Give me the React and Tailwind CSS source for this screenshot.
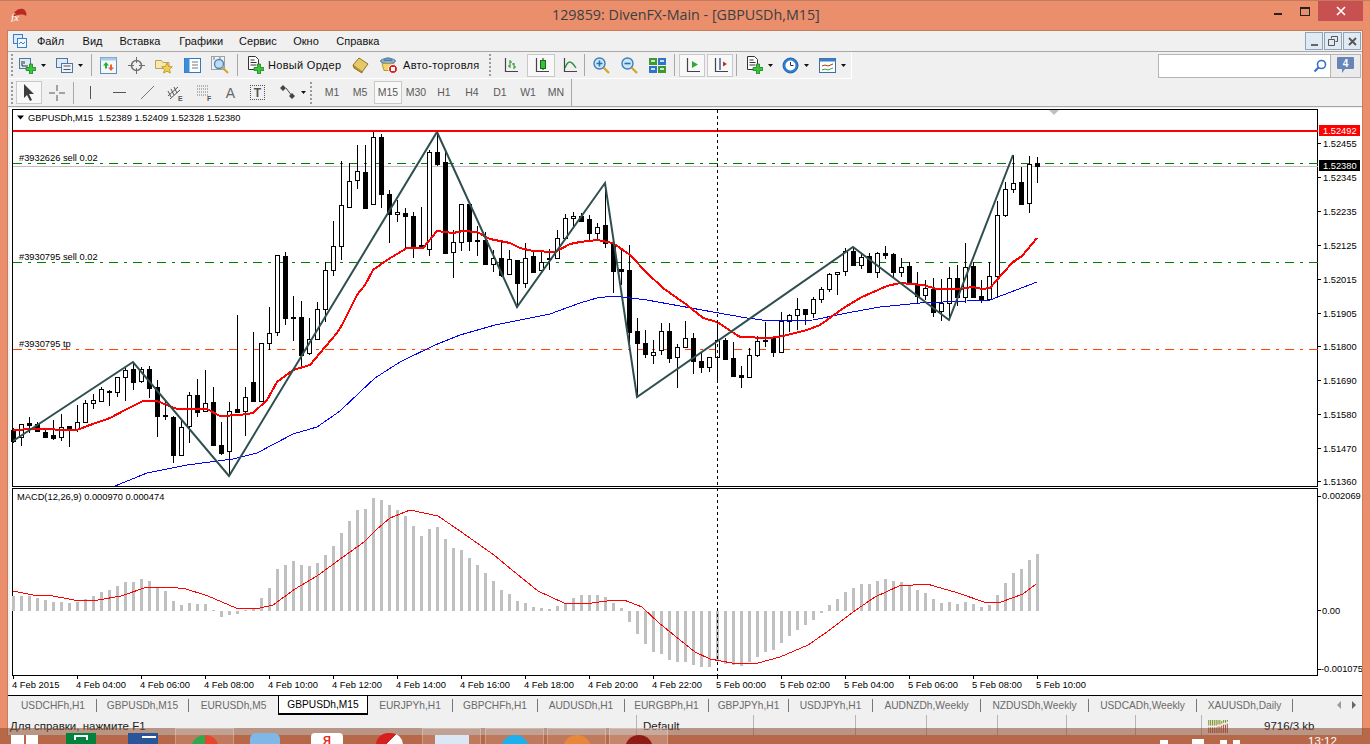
import React from "react";

// hi, body top, body bottom, lo, filled — pixel rows, one candle every 8px from x=13
const CANDLES = [
  [428,430,441,443,1],[424,424,437,446,0],[417,423,425,433,1],[422,424,431,432,1],[428,432,437,437,1],[420,435,438,440,1],
  [414,427,437,441,0],[426,426,429,447,1],[405,422,429,432,0],[400,403,422,422,0],[394,400,403,409,0],[387,389,401,401,0],
  [390,391,392,406,1],[377,377,392,397,0],[368,370,377,401,0],[362,369,382,390,1],[367,369,381,383,0],[366,369,388,398,1],
  [380,387,416,437,1],[401,415,416,420,1],[416,417,455,463,1],[421,427,455,455,0],[392,395,426,443,0],[379,395,412,417,1],
  [370,403,411,412,0],[387,402,445,445,1],[422,445,453,455,1],[402,411,451,476,0],[315,409,412,412,1],[387,397,411,436,0],
  [332,382,401,401,1],[343,343,401,401,0],[307,333,343,350,0],[255,255,332,336,0],[252,256,318,325,1],[296,317,318,341,1],
  [301,317,355,367,1],[318,339,353,355,0],[302,309,339,340,0],[262,270,309,322,0],[221,246,270,276,0],[161,205,246,260,0],
  [163,181,207,207,0],[145,171,180,189,0],[145,172,208,208,1],[132,137,204,204,0],[134,137,194,208,1],[190,194,214,243,1],
  [200,212,214,222,0],[208,213,216,248,1],[212,216,247,258,1],[207,245,248,248,1],[150,152,249,256,0],[132,152,164,166,1],
  [152,162,253,254,1],[230,242,252,278,0],[204,204,242,251,0],[202,204,241,251,1],[226,240,241,256,1],[232,240,264,265,1],
  [250,258,264,272,0],[242,258,275,277,1],[250,259,274,275,0],[260,260,283,308,1],[243,258,283,288,0],[250,256,272,272,1],
  [250,262,270,270,0],[249,258,259,270,0],[230,238,258,259,0],[214,218,238,240,0],[212,216,218,227,0],[213,216,221,222,1],
  [215,219,233,240,1],[223,227,233,240,0],[183,225,243,248,1],[242,244,271,293,1],[248,269,271,285,1],[245,270,332,343,1],
  [318,331,343,397,1],[330,343,354,358,1],[340,352,355,364,0],[323,331,350,355,0],[323,331,358,363,1],[344,347,357,388,0],
  [321,338,347,347,0],[333,338,361,374,1],[352,361,367,373,1],[357,357,367,372,0],[324,340,357,381,0],[338,340,359,359,1],
  [342,358,376,376,1],[366,375,377,388,1],[348,355,377,378,0],[336,341,355,357,0],[322,340,341,347,0],[337,337,352,357,1],
  [312,321,352,353,0],[314,315,321,332,0],[298,309,315,330,0],[309,309,314,325,1],[297,299,313,318,0],[287,289,299,303,0],
  [273,274,289,292,0],[272,272,274,295,0],[248,251,271,276,0],[247,251,265,266,1],[253,257,265,269,0],[253,256,272,273,1],
  [252,253,272,278,0],[246,253,255,259,1],[253,254,272,277,1],[258,267,272,277,0],[262,266,283,285,1],[272,285,296,303,1],
  [280,288,295,300,0],[278,289,312,317,1],[279,303,311,321,0],[267,278,303,320,0],[265,278,297,306,1],[243,267,297,303,0],
  [262,266,297,297,1],[280,296,299,303,1],[262,276,299,300,0],[201,215,276,297,0],[182,189,215,217,0],[155,183,189,193,0],
  [167,182,204,205,1],[156,164,203,213,0],[157,163,166,183,1],
];

const RED_MA = "13,430 33,429 77,430 90,425 110,418 127,409 143,401 157,401 177,409 190,409 207,409 220,416 240,415 253,413 267,400 277,382 293,370 310,365 320,353 337,333 342,325 357,295 365,285 373,270 387,260 407,248 423,248 437,231 453,233 463,231 477,232 490,239 510,243 520,248 533,251 555,252 570,244 580,242 597,240 613,243 630,255 647,273 663,288 677,298 687,305 703,318 717,322 740,337 770,338 783,336 807,330 820,325 845,307 862,297 887,286 900,283 923,285 937,289 960,289 972,287 983,289 990,288 1003,273 1013,262 1022,256 1037,238";
const BLUE_MA = "115,486 147,473 187,465 233,459 257,453 293,434 317,427 340,411 360,392 375,378 400,362 435,345 460,335 495,325 550,314 580,303 597,298 613,296 647,300 680,306 713,312 747,318 770,321 813,320 847,313 880,307 920,303 990,300 1037,282";
const ZIGZAG = "13,441 133,362 229,476 437,132 517,307 605,183 637,397 853,247 949,320 1013,155";
const SIGNAL = "13,591 33,595 48,595 74,600 98,600 121,596 147,587 169,587 186,589 208,596 236,608 260,608 273,605 295,589 317,576 343,557 364,542 377,529 390,518 410,510 438,516 460,531 494,555 512,570 538,591 564,603 592,603 607,601 624,600 642,607 659,623 680,640 695,652 710,659 732,663 758,663 780,657 808,645 827,632 853,612 875,597 899,586 927,584 958,593 984,602 1001,602 1023,594 1036,584";

// MACD histogram, height of each bar above (or below when negative) the zero line at y=611
const MACD = [
  15,15,15,13,11,9,9,8,9,12,15,19,21,25,29,29,32,30,24,20,10,6,8,7,7,1,-6,-4,-3,1,3,13,23,42,46,50,46,45,48,56,65,78,90,101,102,113,111,106,101,95,85,75,82,84,72,63,61,53,46,38,30,21,17,10,8,4,3,2,5,8,13,16,16,16,14,8,3,
  -11,-23,-33,-41,-43,-49,-51,-51,-54,-56,-56,-50,-53,-54,-55,-51,-46,-41,-39,-32,-25,-19,-14,-9,-2,6,12,19,23,27,27,30,32,30,29,26,21,18,12,8,9,7,9,7,4,6,16,28,38,42,51,57,
];

const PRICE_LABELS = [
  ["1.52455", 143], ["1.52345", 177], ["1.52235", 211], ["1.52125", 245], ["1.52015", 279], ["1.51905", 313],
  ["1.51800", 346], ["1.51690", 380], ["1.51580", 414], ["1.51470", 448], ["1.51360", 481],
];

const TIME_LABELS = [
  "4 Feb 2015", "4 Feb 04:00", "4 Feb 06:00", "4 Feb 08:00", "4 Feb 10:00", "4 Feb 12:00", "4 Feb 14:00", "4 Feb 16:00", "4 Feb 18:00",
  "4 Feb 20:00", "4 Feb 22:00", "5 Feb 00:00", "5 Feb 02:00", "5 Feb 04:00", "5 Feb 06:00", "5 Feb 08:00", "5 Feb 10:00",
];

const TABS = [
  ["USDCHFh,H1", "w-[87px]"], ["GBPUSDh,M15", "w-[92px]"], ["EURUSDh,M5", "w-[89px]"], ["GBPUSDh,M15", "w-[90px]"],
  ["EURJPYh,H1", "w-[85px]"], ["GBPCHFh,H1", "w-[85px]"], ["AUDUSDh,H1", "w-[87px]"], ["EURGBPh,H1", "w-[84px]"],
  ["GBPJPYh,H1", "w-[80px]"], ["USDJPYh,H1", "w-[84px]"], ["AUDNZDh,Weekly", "w-[108px]"], ["NZDUSDh,Weekly", "w-[108px]"],
  ["USDCADh,Weekly", "w-[108px]"], ["XAUUSDh,Daily", "w-[96px]"],
];

const MENU = [
  ["Файл", "ml-[10px]"], ["Вид", "ml-[18.5px]"], ["Вставка", "ml-[17px]"], ["Графики", "ml-[19px]"],
  ["Сервис", "ml-[16px]"], ["Окно", "ml-[16.5px]"], ["Справка", "ml-[17.5px]"],
];

const PERIODS = ["M1", "M5", "M15", "M30", "H1", "H4", "D1", "W1", "MN"];

const Chart = () => (
  <svg viewBox="8 107 1354 588" className="block h-[588px] w-[1354px]">
    <rect x="8" y="107" width="1354" height="588" fill="#ffffff" />
    <rect x="8" y="107" width="2" height="588" fill="#f0f0f0" />
    <rect x="8" y="107" width="1354" height="1" fill="#f0f0f0" />

    {/* panes */}
    <g shapeRendering="crispEdges" fill="none" stroke="#000000">
      <rect x="12.5" y="109.5" width="1305" height="377" />
      <rect x="12.5" y="488.5" width="1305" height="187" />
    </g>

    {/* order lines */}
    <g shapeRendering="crispEdges">
      <line x1="13" x2="1318" y1="166" y2="166" stroke="#c0c0c0" />
      <line x1="13" x2="1318" y1="163.5" y2="163.5" stroke="#008000" strokeDasharray="9 6 3 6" />
      <line x1="13" x2="1318" y1="262.5" y2="262.5" stroke="#008000" strokeDasharray="9 6 3 6" />
      <line x1="13" x2="1318" y1="349.5" y2="349.5" stroke="#ff4500" strokeDasharray="9 6 3 6" />
    </g>

    {/* candles */}
    <g shapeRendering="crispEdges">
      {CANDLES.map(([hi, top, bot, lo, filled], i) => {
        const x = 13 + 8 * i;
        return (
          <g key={i}>
            <line x1={x + 0.5} x2={x + 0.5} y1={hi} y2={lo} stroke="#000000" />
            <rect x={x - 1.5} y={top + 0.5} width="4" height={Math.max(bot - top, 1)} fill={filled ? "#000000" : "#ffffff"} stroke="#000000" />
          </g>
        );
      })}
    </g>

    <polyline points={BLUE_MA} fill="none" stroke="#0000ff" strokeWidth="1" shapeRendering="crispEdges" />
    <polyline points={RED_MA} fill="none" stroke="#ff0000" strokeWidth="2" shapeRendering="crispEdges" />
    <polyline points={ZIGZAG} fill="none" stroke="#2f4f4f" strokeWidth="2" />
    <rect x="13" y="130" width="1305" height="2" fill="#ff0000" />
    <path d="M1049 110h10l-5 5z" fill="#c0c0c0" />

    {/* MACD */}
    <g shapeRendering="crispEdges" fill="#c0c0c0">
      {MACD.map((v, i) => (
        <rect key={i} x={12 + 8 * i} y={v > 0 ? 611 - v : 611} width="3" height={Math.abs(v)} />
      ))}
    </g>
    <polyline points={SIGNAL} fill="none" stroke="#ff0000" strokeWidth="1" shapeRendering="crispEdges" />

    <line x1="717.5" x2="717.5" y1="110" y2="676" stroke="#000000" strokeDasharray="3 3" shapeRendering="crispEdges" />

    {/* labels inside the panes */}
    <g className="fill-black text-[9.3px]">
      <path d="M17 115.5h7l-3.5 4z" fill="#000000" />
      <text x="28" y="121">GBPUSDh,M15&#160;&#160;1.52389 1.52409 1.52328 1.52380</text>
      <text x="19" y="161">#3932626 sell 0.02</text>
      <text x="19" y="260">#3930795 sell 0.02</text>
      <text x="19" y="347">#3930795 tp</text>
      <text x="17" y="500">MACD(12,26,9) 0.000970 0.000474</text>
    </g>

    {/* price scale */}
    <g className="fill-black text-[9.3px]">
      {PRICE_LABELS.map(([label, y]) => (
        <g key={label}>
          <rect x="1318" y={y} width="3" height="1" fill="#000000" />
          <text x="1323" y={y + 3.5}>{label}</text>
        </g>
      ))}
      <rect x="1318" y="496" width="3" height="1" fill="#000000" />
      <rect x="1318" y="610" width="3" height="1" fill="#000000" />
      <rect x="1318" y="669" width="3" height="1" fill="#000000" />
      <text x="1322" y="499">0.002069</text>
      <text x="1322" y="614">0.00</text>
      <text x="1321" y="672">-0.001075</text>
    </g>
    <rect x="1319" y="125" width="41" height="11" fill="#ff0000" />
    <text x="1323" y="134" className="fill-white text-[9.3px]">1.52492</text>
    <rect x="1319" y="160" width="41" height="11" fill="#000000" />
    <text x="1323" y="169" className="fill-white text-[9.3px]">1.52380</text>

    {/* time scale */}
    <g className="fill-black text-[9.4px]">
      {TIME_LABELS.map((label, i) => (
        <g key={i}>
          <rect x={13 + 64 * i} y="676" width="1" height="3" fill="#000000" />
          <text x={12 + 64 * i} y="688">{label}</text>
        </g>
      ))}
    </g>
  </svg>
);

/* ---------- toolbar bits ---------- */

const Grip = ({ className = "" }) => <div className={`h-[22px] w-[3px] shrink-0 border-l-2 border-dotted border-[#9a9a9a] ${className}`} />;
const Sep = ({ className = "" }) => <div className={`h-[22px] w-px shrink-0 bg-[#a8a8a8] ${className}`} />;
const Caret = () => <svg width="5" height="3" viewBox="0 0 5 3" className="shrink-0"><path d="M0 0h5L2.5 3z" fill="#111111" /></svg>;

const Ico = ({ children, w = 17, h = 17, vb }) => (
  <svg width={w} height={h} viewBox={vb || `0 0 ${w} ${h}`} className="block shrink-0">{children}</svg>
);

const GreenPlus = ({ x = 7, y = 7 }) => (
  <path transform={`translate(${x} ${y})`} d="M3.5 0h3v3.5H10v3H6.5V10h-3V6.5H0v-3h3.5z" fill="#3cc43c" stroke="#17801f" strokeWidth="0.8" />
);

const DocWin = () => (
  <>
    <rect x="0.5" y="1.5" width="11" height="10" fill="#dfeaf6" stroke="#4f76a3" />
    <path d="M3 4v5h6M5 4v3" stroke="#333333" fill="none" />
  </>
);

const NewChartIcon = () => <Ico><DocWin /><GreenPlus /></Ico>;
const ProfileIcon = () => (
  <Ico>
    <rect x="0.5" y="1.5" width="11" height="9" fill="#dfeaf6" stroke="#4f76a3" />
    <rect x="5.5" y="6.5" width="11" height="9" fill="#edf3fa" stroke="#4f76a3" />
    <path d="M7.5 9h7M7.5 12.5h7" stroke="#555555" />
  </Ico>
);
const MarketIcon = () => (
  <Ico>
    <rect x="0.5" y="0.5" width="16" height="16" fill="#f4f8fc" stroke="#5c8fb8" />
    <rect x="0.5" y="0.5" width="16" height="3" fill="#a9cbe6" />
    <path d="M6 5l3 3.5H7v3H5v-3H3z" fill="#2bab3a" />
    <path d="M11 14l-3-3.5h2v-3h2v3h2z" fill="#e2632f" />
  </Ico>
);
const CrossIcon = () => (
  <Ico>
    <circle cx="8.5" cy="8.5" r="5" fill="none" stroke="#6e6e6e" strokeWidth="1.5" />
    <path d="M8.5 0v6M8.5 11v6M0 8.5h6M11 8.5h6" stroke="#6e6e6e" />
  </Ico>
);
const FolderStarIcon = () => (
  <Ico w={18} h={17}>
    <path d="M0.5 3.5h6l1.5 2h6v6h-13.5z" fill="#f6e9ae" stroke="#b9a35e" />
    <path d="M12 6l1.6 3.4 3.7.4-2.7 2.5.7 3.7-3.3-1.8-3.3 1.8.7-3.7-2.7-2.5 3.7-.4z" fill="#f3cf4d" stroke="#b58e1f" strokeWidth="0.8" />
  </Ico>
);
const NavigatorIcon = () => (
  <Ico>
    <rect x="0.5" y="1.5" width="16" height="14" fill="#ffffff" stroke="#2f78c4" />
    <rect x="0.5" y="1.5" width="5" height="14" fill="#3d8ed8" />
    <path d="M8 5h6M8 8h6M8 11h6" stroke="#777777" />
  </Ico>
);
const LensChartIcon = () => (
  <Ico w={18} h={18}>
    <rect x="0.5" y="0.5" width="13" height="13" fill="#eef1f5" stroke="#9aa3ad" />
    <path d="M3 1v3M9 1v3" stroke="#777777" />
    <circle cx="8" cy="8" r="4.5" fill="#bcdcf3" stroke="#5785ad" strokeWidth="1.4" />
    <path d="M11.5 11.5L17 17" stroke="#d3a32a" strokeWidth="2" />
  </Ico>
);
const NewOrderIcon = () => (
  <Ico w={17} h={18}>
    <path d="M1.5 0.5h7l3 3v10h-10z" fill="#ffffff" stroke="#333333" />
    <path d="M3.5 4h4M3.5 6.5h6M3.5 9h6" stroke="#333333" />
    <GreenPlus x={7} y={8} />
  </Ico>
);
const BookIcon = () => (
  <Ico>
    <path d="M1 8L7 1l9 6-6 8z" fill="#e7c866" stroke="#8f7423" />
    <path d="M1 8l1 3 8 5 0-2" fill="#b8933a" stroke="#8f7423" />
  </Ico>
);
const AutoTradeIcon = () => (
  <Ico w={18} h={18}>
    <ellipse cx="8" cy="5" rx="7.5" ry="2.5" fill="#8ab4d8" stroke="#4a7aa6" />
    <path d="M4 4.5C4 1 12 1 12 4.5z" fill="#6f9dc6" stroke="#4a7aa6" />
    <path d="M2 7.5h12l-1 7H4z" fill="#f2d568" stroke="#b89a35" />
    <circle cx="13" cy="13" r="4.5" fill="#d42020" stroke="#ffffff" />
    <rect x="11" y="11" width="4" height="4" fill="#ffffff" />
  </Ico>
);
const Axis = () => <path d="M3.5 1v13.5H16" fill="none" stroke="#444444" strokeWidth="1.2" />;
const BarsIcon = () => (
  <Ico>
    <Axis />
    <path d="M8 3v8M6 9h2M8 5h2M12 6v6M10 7h2M12 10h2" stroke="#1d8a1d" fill="none" />
  </Ico>
);
const CandleIcon = () => (
  <Ico>
    <Axis />
    <path d="M10 1v12" stroke="#222222" />
    <rect x="7.5" y="3.5" width="5" height="8" fill="#38c038" stroke="#176b17" />
  </Ico>
);
const LineIcon = () => (
  <Ico>
    <Axis />
    <path d="M4 11C7 3 10 3 15 11" fill="none" stroke="#2e8b3e" strokeWidth="1.3" />
  </Ico>
);
const Lens = ({ plus }) => (
  <Ico>
    <circle cx="6.5" cy="6.5" r="5.5" fill="#c9e6fa" stroke="#3f7fb8" strokeWidth="1.4" />
    <path d={plus ? "M3.5 6.5h6M6.5 3.5v6" : "M3.5 6.5h6"} stroke="#2f6fa8" strokeWidth="1.6" />
    <path d="M10.5 10.5L16 16" stroke="#d3a32a" strokeWidth="2.2" />
  </Ico>
);
const TileIcon = () => (
  <Ico>
    <rect x="0" y="1" width="8" height="7" fill="#3d9a2c" />
    <rect x="9" y="1" width="8" height="7" fill="#2f74c8" />
    <rect x="0" y="9" width="8" height="7" fill="#2f74c8" />
    <rect x="9" y="9" width="8" height="7" fill="#3d9a2c" />
    <path d="M2 4h4M11 4h4M2 12h4M11 12h4" stroke="#ffffff" strokeWidth="1.5" />
  </Ico>
);
const AutoScrollIcon = () => (
  <Ico>
    <Axis />
    <path d="M8 4v7l6-3.5z" fill="#2faa3a" />
  </Ico>
);
const ShiftIcon = () => (
  <Ico>
    <Axis />
    <path d="M8 1v12" stroke="#3a5a90" strokeWidth="1.4" />
    <path d="M15 7l-4-2.5v5z" fill="#b5341a" />
  </Ico>
);
const ClockIcon = () => (
  <Ico>
    <circle cx="8.5" cy="8.5" r="7.5" fill="#2f7fd0" stroke="#1d5fa8" />
    <circle cx="8.5" cy="8.5" r="5" fill="#ffffff" />
    <path d="M8.5 5v3.5h3" stroke="#333333" fill="none" />
  </Ico>
);
const TemplateIcon = () => (
  <Ico>
    <rect x="0.5" y="1.5" width="16" height="14" fill="#ffffff" stroke="#3d6ea5" />
    <rect x="0.5" y="1.5" width="16" height="3" fill="#3d7fc4" />
    <path d="M3 9l3-1 3 1 5-2" stroke="#b5341a" fill="none" />
    <path d="M3 13l3-1 3 1 5-2" stroke="#2faa3a" fill="none" />
  </Ico>
);

const Btn = ({ children, className = "", active = false }) => (
  <div className={`flex h-[23px] shrink-0 items-center justify-center ${active ? "border border-[#c9c9c9] bg-[#f8f8f8]" : ""} ${className.includes("w-[") ? "" : "w-[28px]"} ${className}`}>
    {children}
  </div>
);

const Drop = ({ children, className = "" }) => (
  <div className={`flex shrink-0 items-center gap-[5px] ${className}`}>
    {children}
    <Caret />
  </div>
);

const MdiBtn = ({ children }) => (
  <div className="flex h-[18px] w-[18px] items-center justify-center border border-[#8fa3b5] bg-[#dfeaf5]">{children}</div>
);

const TaskFrame = ({ children, className = "" }) => (
  <div className={`flex h-[16px] w-[59px] shrink-0 justify-center overflow-hidden border border-b-0 border-[#ffffff40] bg-[#ffffff1f] pt-[6px] ${className}`}>
    {children}
  </div>
);

const Round = ({ className }) => <div className={`h-[28px] w-[28px] shrink-0 rounded-full ${className}`} />;

export default function App() {
  return (
    <div className="relative flex h-[744px] w-[1370px] flex-col overflow-hidden bg-[#eb8e6b] font-['Liberation_Sans',sans-serif]">
      {/* title bar */}
      <div className="flex h-[30px] shrink-0 items-start border-t border-[#c67a5c]">
        <div className="ml-[10px] mt-[7px] w-[17px]">
          <svg width="17" height="14" viewBox="0 0 17 14">
            <path d="M3 9C3 3 9 0 13 1c3 1 4 5 3 7-3-2-8-2-13 1z" fill="#b82a22" />
            <text x="1" y="13" fill="#ffffff" className="font-['Liberation_Serif',serif] text-[11px] italic">fx</text>
          </svg>
        </div>
        <div className="ml-[525px] mt-[4px] w-[270px] whitespace-nowrap font-['Open_Sans',sans-serif] text-[14.3px] leading-[20px] text-[#3a3f42]">
          129859: DivenFX-Main - [GBPUSDh,M15]
        </div>
        <div className="ml-[452px] mt-[12px] h-[2px] w-[8px] bg-[#222222]" />
        <div className="ml-[18px] mt-[6px] h-[9px] w-[10px] border border-t-2 border-[#222222]" />
        <div className="ml-[8px] flex h-[20px] w-[45px] items-center justify-center bg-[#c75050]">
          <svg width="10" height="10" viewBox="0 0 10 10"><path d="M1 1l8 8M9 1l-8 8" stroke="#ffffff" strokeWidth="1.6" /></svg>
        </div>
      </div>

      {/* terminal window */}
      <div className="ml-[8px] flex h-[705px] w-[1354px] shrink-0 flex-col bg-[#f0f0f0] text-[12px] text-[#111111] shadow-[-1px_0_0_#c87d60,1px_0_0_#c87d60]">
        {/* menu */}
        <div className="flex h-[22px] shrink-0 items-center border-t border-[#c67a5c] border-b border-b-[#a8a8a8] pl-[5px] text-[11px]">
          <svg width="14" height="14" viewBox="0 0 14 14" className="shrink-0">
            <rect x="0.5" y="0.5" width="9" height="9" fill="#dcebf9" stroke="#3d7fc4" />
            <rect x="4.5" y="4.5" width="9" height="9" fill="#f2f7fc" stroke="#3d7fc4" />
            <path d="M6 10l2-2 2 2 2-2" stroke="#3d7fc4" fill="none" />
          </svg>
          {MENU.map(([label, gap]) => (
            <span key={label} className={gap}>{label}</span>
          ))}
          <div className="ml-auto mr-[1px] flex gap-px">
            <MdiBtn><div className="mt-[7px] h-[2px] w-[7px] bg-[#666666]" /></MdiBtn>
            <MdiBtn>
              <svg width="10" height="10" viewBox="0 0 10 10"><path d="M3.5 2.5V.5h6v5h-2M.5 3.5h6v6h-6z" fill="none" stroke="#555555" /></svg>
            </MdiBtn>
            <MdiBtn>
              <svg width="9" height="9" viewBox="0 0 9 9"><path d="M1 1l7 7M8 1L1 8" stroke="#555555" strokeWidth="1.8" /></svg>
            </MdiBtn>
          </div>
        </div>

        {/* standard toolbar */}
        <div className="flex h-[27px] shrink-0 items-center">
          <div className="flex h-full w-[844px] shrink-0 items-center border-b border-r border-white pl-[3px]">
            <Grip />
            <Drop className="ml-[5px]"><NewChartIcon /></Drop>
            <Drop className="ml-[10px]"><ProfileIcon /></Drop>
            <Sep className="ml-[8px]" />
            <Btn className="ml-[2px]"><MarketIcon /></Btn>
            <Btn><CrossIcon /></Btn>
            <Btn><FolderStarIcon /></Btn>
            <Btn><NavigatorIcon /></Btn>
            <Btn><LensChartIcon /></Btn>
            <Sep className="ml-[3px]" />
            <div className="ml-[9px] flex w-[95px] shrink-0 items-center gap-[4px] text-[11px]">
              <NewOrderIcon />
              <span className="whitespace-nowrap tracking-[0.3px]">Новый Ордер</span>
            </div>
            <div className="ml-[10px]"><BookIcon /></div>
            <div className="ml-[11px] flex w-[101px] shrink-0 items-center gap-[5px] text-[11px]">
              <AutoTradeIcon />
              <span className="whitespace-nowrap tracking-[0.3px]">Авто-торговля</span>
            </div>
            <Grip className="ml-[8px]" />
            <Btn className="ml-[4px]"><BarsIcon /></Btn>
            <Btn className="ml-[3px]" active><CandleIcon /></Btn>
            <Btn><LineIcon /></Btn>
            <Sep className="ml-px" />
            <Btn className="ml-[2px]"><Lens plus /></Btn>
            <Btn><Lens /></Btn>
            <Btn><TileIcon /></Btn>
            <Sep className="ml-[3px]" />
            <Btn className="ml-[4px] w-[26px]" active><AutoScrollIcon /></Btn>
            <Btn className="ml-[2px] w-[26px]" active><ShiftIcon /></Btn>
            <Sep className="ml-[3px]" />
            <Drop className="ml-[9px]"><NewOrderIcon /></Drop>
            <Drop className="ml-[9px]"><ClockIcon /></Drop>
            <Drop className="ml-[10px]"><TemplateIcon /></Drop>
          </div>
          <div className="ml-auto mr-px flex h-[24px] items-stretch">
            <div className="flex w-[173px] items-center justify-end border border-[#b5b5b5] bg-white pr-[3px]">
              <svg width="14" height="14" viewBox="0 0 14 14">
                <circle cx="8.5" cy="5.5" r="4" fill="none" stroke="#3a6fc8" strokeWidth="1.6" />
                <path d="M5.5 8.5L1.5 12.5" stroke="#3a6fc8" strokeWidth="2.2" />
              </svg>
            </div>
            <div className="flex w-[30px] items-center justify-center border border-l-0 border-[#b5b5b5] bg-[#ebebeb]">
              <svg width="17" height="17" viewBox="0 0 17 17">
                <path d="M1 0h15a1 1 0 0 1 1 1v10a1 1 0 0 1-1 1H8l-3 4v-4H1a1 1 0 0 1-1-1V1a1 1 0 0 1 1-1z" fill="#6885b8" />
                <text x="8.5" y="10" textAnchor="middle" fill="#ffffff" className="text-[10px] font-bold">4</text>
              </svg>
            </div>
          </div>
        </div>

        {/* drawing + periods toolbar */}
        <div className="flex h-[27px] shrink-0">
          <div className="flex h-full w-[564px] shrink-0 items-center border-r border-[#a8a8a8] pl-[3px]">
            <Grip />
            <Btn className="ml-[2px] w-[26px]" active>
              <svg width="12" height="17" viewBox="0 0 12 17"><path d="M1 0v14l3-3 3 6 2-1-3-6h5z" fill="#3c3c3c" /></svg>
            </Btn>
            <div className="ml-[7px]">
              <Ico w={16} h={16}><path d="M0 8h6M10 8h6M8 0v6M8 10v6" stroke="#555555" /></Ico>
            </div>
            <Sep className="ml-[8px]" />
            <div className="ml-[8px]"><Ico><path d="M8.5 2v13" stroke="#555555" /></Ico></div>
            <div className="ml-[12px]"><Ico><path d="M2 8.5h13" stroke="#555555" /></Ico></div>
            <div className="ml-[11px]"><Ico><path d="M2 15L15 2" stroke="#777777" /></Ico></div>
            <div className="ml-[11px]">
              <Ico>
                <path d="M1 12L11 3M3 15L13 6M1 7l3 6M4 5l3 6M7 3l3 6" stroke="#555555" />
                <text x="11" y="17" fill="#555555" className="text-[7px] font-bold">E</text>
              </Ico>
            </div>
            <div className="ml-[12px]">
              <Ico>
                <path d="M1 2h12M1 5h12M1 8h12M1 11h12" stroke="#777777" strokeDasharray="1 1" />
                <text x="11" y="17" fill="#555555" className="text-[7px] font-bold">F</text>
              </Ico>
            </div>
            <div className="ml-[9px] flex w-[17px] justify-center text-[14px] leading-none text-[#666666]">A</div>
            <div className="ml-[11px] flex h-[15px] w-[15px] items-center justify-center border border-dotted border-[#555555] text-[12px] font-bold leading-none text-[#555555]">T</div>
            <div className="ml-[15px]">
              <Ico><path d="M3 1l3 3-3 3-3-3zM12 9l3 3-3 3-3-3z" fill="#444444" /><path d="M6 4l6 8" stroke="#444444" /></Ico>
            </div>
            <div className="ml-[4px]"><Caret /></div>
            <Grip className="ml-[4px]" />
            <div className="ml-[5px] flex">
              {PERIODS.map((p) => (
                <Btn key={p} active={p === "M15"} className="text-[10.5px] text-[#5a5a5a]">{p}</Btn>
              ))}
            </div>
          </div>
        </div>

        {/* chart */}
        <div className="h-px shrink-0 bg-[#a5a5a5]" />
        <div className="h-[588px] shrink-0 overflow-hidden"><Chart /></div>

        {/* tabs */}
        <div className="flex h-[20px] shrink-0 items-start border-t border-black text-[10.2px] leading-[18px] text-[#6a6a6a]">
          <div className="w-[2px] shrink-0" />
          {TABS.map(([t, w], i) =>
            i === 3 ? (
              <div key={i} className={`${w} h-[19px] shrink-0 border-x border-b-2 border-black bg-white text-center text-black`}>{t}</div>
            ) : (
              <div key={i} className={`${w} mt-[3px] flex h-[13px] shrink-0 items-center justify-center whitespace-nowrap ${i === 2 ? "" : "border-r border-[#777777]"}`}>{t}</div>
            ),
          )}
          <div className="ml-auto mr-[6px] mt-[5px] flex gap-[11px]">
            <svg width="4" height="8" viewBox="0 0 4 8"><path d="M4 0v8L0 4z" fill="#9a9a9a" /></svg>
            <svg width="4" height="8" viewBox="0 0 4 8"><path d="M0 0v8l4-4z" fill="#666666" /></svg>
          </div>
        </div>

        {/* status bar */}
        <div className="flex h-[20px] shrink-0 items-start text-[11.5px] leading-[14px] text-[#222222]">
          <div className="w-[628px] shrink-0 pl-[2px] pt-[4px]">Для справки, нажмите F1</div>
          <div className="h-full w-[117px] shrink-0 border-l border-[#b5b5b5] pl-[6px] pt-[4px]">Default</div>
          <div className="h-full w-[102px] shrink-0 border-l border-[#b5b5b5]" />
          <div className="h-full w-[71px] shrink-0 border-l border-[#b5b5b5]" />
          <div className="h-full w-[71px] shrink-0 border-l border-[#b5b5b5]" />
          <div className="h-full w-[69px] shrink-0 border-l border-[#b5b5b5]" />
          <div className="h-full w-[69px] shrink-0 border-l border-[#b5b5b5]" />
          <div className="h-full w-[66px] shrink-0 border-l border-[#b5b5b5]" />
          <div className="flex h-full w-[154px] shrink-0 items-start border-l border-[#b5b5b5] pl-[5px]">
            <svg width="23" height="13" viewBox="0 0 23 14" className="mt-[5px] shrink-0">
              <path d="M1 0v6M3 0v6M5 0v6M7 0v6M9 0v6M11 0v5M13 0v5M15 1v3M17 0v3M19 0v3M21 0v2" stroke="#6d8a12" />
              <path d="M1 8v6M3 8v6M5 8v6M7 8v6M9 8v6M11 7v7M13 7v7M15 6v8M17 5v9M19 5v9M21 4v10" stroke="#a5452e" />
            </svg>
            <span className="ml-[34px] mt-[4px]">9716/3 kb</span>
          </div>
        </div>
      </div>

      {/* translucent windows taskbar lying over the window bottom */}
      <div className="absolute bottom-0 left-0 flex h-[16px] w-full items-start overflow-hidden bg-[#8b482a8a]">
        <div className="ml-[11px] mt-[7px] grid h-[16px] w-[27px] shrink-0 grid-cols-2 gap-[2px]">
          <div className="bg-white" /><div className="bg-white" />
        </div>
        <div className="ml-[28px] mt-[5px] flex h-[16px] w-[30px] shrink-0 justify-center bg-[#00843d] pt-[2px]">
          <div className="h-[5px] w-[14px] border-2 border-b-0 border-white" />
        </div>
        <div className="ml-[32px] mt-[5px] h-[16px] w-[30px] shrink-0 bg-[#2a5699] pl-[14px] pt-[3px]">
          <div className="h-[2px] w-[14px] bg-white" />
        </div>
        <TaskFrame className="ml-[17px]">
          <Round className="bg-[conic-gradient(#e8452c_0_35%,#f7c52b_35%_65%,#2fa84f_65%_100%)]" />
        </TaskFrame>
        <div className="ml-[16px] mt-[5px] h-[16px] w-[30px] shrink-0 rounded-t-md bg-[#7fb8e6]" />
        <div className="ml-[31px] mt-[5px] flex h-[16px] w-[32px] shrink-0 justify-center rounded-t-sm bg-white pt-[1px] text-[11px] font-bold leading-[13px] text-[#e02c20]">Я</div>
        <div className="ml-[33px] mt-[5px] h-[16px] w-[27px] shrink-0 rounded-t-xl bg-[linear-gradient(135deg,#d62020_50%,#ffffff_50%)]" />
        <TaskFrame className="ml-[19px]">
          <div className="h-[16px] w-[34px] bg-[#dbe7f4]" />
        </TaskFrame>
        <TaskFrame className="ml-[4px]"><Round className="bg-[#1cb0ee]" /></TaskFrame>
        <TaskFrame className="ml-[3px]"><Round className="bg-[#e8873a]" /></TaskFrame>
        <TaskFrame className="ml-[3px] bg-[#ffffff33]"><Round className="bg-[#8f1d16]" /></TaskFrame>
        <div className="ml-[492px] mt-[12px] h-[4px] w-[8px] bg-white" />
        <div className="ml-[24px] mt-[11px] h-[5px] w-[12px] bg-white" />
        <div className="ml-[16px] mt-[12px] h-[4px] w-[7px] bg-white" />
        <div className="ml-[6px] mt-[12px] h-[4px] w-[7px] bg-white" />
        <div className="ml-[68px] mt-[6px] shrink-0 text-[11.5px] leading-[14px] text-white">13:12</div>
      </div>
    </div>
  );
}
